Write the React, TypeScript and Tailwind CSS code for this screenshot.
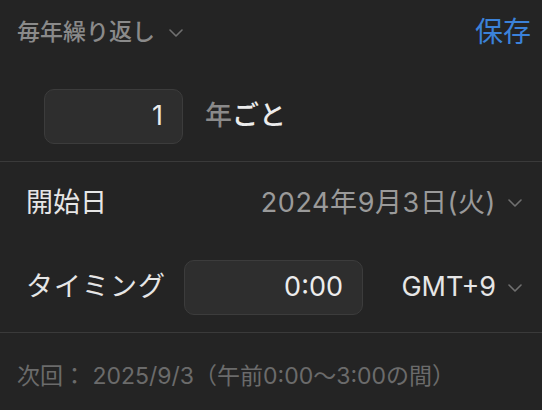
import React from 'react';

const font = { fontFamily: 'Inter, "Noto Sans CJK JP", sans-serif' };

const Chevron: React.FC<{ className?: string }> = ({ className }) => (
  <svg viewBox="0 0 14 8" className={className} fill="none" stroke="currentColor" strokeWidth={1.6} strokeLinecap="round" strokeLinejoin="round">
    <path d="M1 1l6 6 6-6" />
  </svg>
);

const App: React.FC = () => {
  return (
    <div className="w-[542px] h-[410px] bg-[#242424] overflow-hidden" style={font}>
      {/* header */}
      <div className="flex items-center justify-between pl-[17px] pr-[11px] h-[64px]">
        <div className="flex items-center gap-[14px] text-[#8a8a8a]">
          <span className="text-[23px] font-medium">毎年繰り返し</span>
          <Chevron className="w-[14px] h-[8px] text-[#707070] mt-[2px]" />
        </div>
        <button className="text-[28px] text-[#3b82d9]">保存</button>
      </div>

      {/* interval */}
      <div className="flex items-center pl-[44px] pt-[25px] pb-[17px]">
        <div className="w-[139px] h-[55px] rounded-[10px] bg-[#2e2e2e] border border-[#3c3c3c] flex items-center justify-end pr-[19px] text-[27px] text-[#ececec]">
          1
        </div>
        <div className="ml-[22px] text-[27px] font-medium">
          <span className="text-[#8a8a8a]">年</span>
          <span className="text-[#ececec]">ごと</span>
        </div>
      </div>

      <div className="h-[1px] bg-[#3a3a3a]" />

      {/* start date */}
      <div className="flex items-center justify-between pl-[26px] pr-[20px] h-[82px]">
        <span className="text-[27px] text-[#e6e6e6]">開始日</span>
        <div className="flex items-center gap-[12px]">
          <span className="text-[27px] tracking-[0.6px] text-[#9a9a9a]">2024年9月3日(火)</span>
          <Chevron className="w-[14px] h-[8px] text-[#707070]" />
        </div>
      </div>

      {/* timing */}
      <div className="flex items-center pl-[26px] pr-[20px] pt-[16px] pb-[17px]">
        <span className="text-[27px] tracking-[1px] text-[#e6e6e6] w-[158px]">タイミング</span>
        <div className="w-[179px] h-[55px] rounded-[10px] bg-[#2e2e2e] border border-[#3c3c3c] flex items-center justify-end pr-[19px] text-[27px] text-[#ececec]">
          0:00
        </div>
        <div className="ml-auto flex items-center gap-[12px]">
          <span className="text-[27px] text-[#e6e6e6]">GMT+9</span>
          <Chevron className="w-[14px] h-[8px] text-[#707070]" />
        </div>
      </div>

      <div className="h-[1px] bg-[#3a3a3a]" />

      {/* next */}
      <div className="pl-[17px] pt-[26px] text-[23px] text-[#6b6b6b]">
        次回： 2025/9/3（午前0:00〜3:00の間）
      </div>
    </div>
  );
};

export default App;
